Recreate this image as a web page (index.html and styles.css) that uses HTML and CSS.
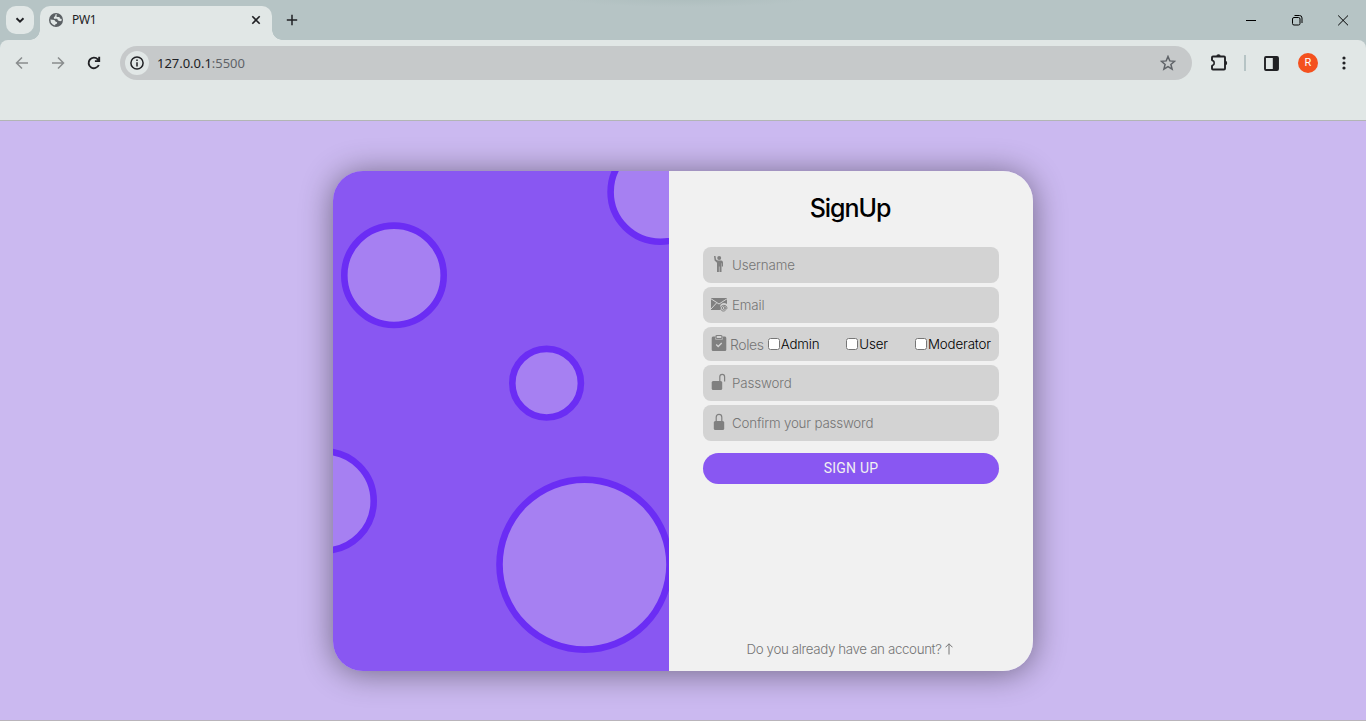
FILE: index.html
```html
<!DOCTYPE html>
<html lang="en">
<head>
<meta charset="utf-8">
<title>PW1</title>
<link rel="stylesheet" href="styles.css">
</head>
<body>
<header class="browser">
  <div class="tabstrip">
    <button class="tab-search" aria-label="Search tabs"><svg width="10" height="10" viewBox="0 0 10 10"><path class="line thick" d="M1.5 3.2 5 6.6 8.500 3.200"/></svg></button>
    <div class="tab">
      <svg width="14" height="14" viewBox="0 0 14 14"><circle cx="7" cy="7" r="7" fill="#5b6064"/><path fill="#e1e7e6" d="M8 1.300 6.300 1.500V3L4.800 4.200 5 5.800H8.200L9 7.500 11.200 8.300 12.600 7.800 12.700 6 11 5.500 10.400 4.100H8.200L7.300 3.200Z M1.400 6.600 5.400 7 6.500 8.600 8.200 9.200 7.800 10.700 6.300 11.300 6.100 12.600 3.800 11.600 1.900 9.500Z"/></svg>
      <span class="tab-title">PW1</span>
      <svg width="10" height="10" viewBox="0 0 10 10"><path class="line close" d="M1.300 1.300 8.700 8.700M8.700 1.300 1.300 8.700"/></svg>
    </div>
    <svg class="new-tab" width="12" height="12" viewBox="0 0 12 12"><path class="line" d="M6 .8V11.200M.8 6H11.200"/></svg>
    <div class="window-controls">
      <svg width="11" height="11" viewBox="0 0 11 11"><path class="hair" d="M0 5.500H10"/></svg>
      <svg width="11" height="11" viewBox="0 0 11 11"><rect class="hair" x=".5" y="2.500" width="7.500" height="7.500" rx="1.500"/><path class="hair" d="M2.500 .5H7.500Q10 .5 10 3V8"/></svg>
      <svg width="11" height="11" viewBox="0 0 11 11"><path class="hair" d="M.2.500 10 10.300M10 .5.2 10.300"/></svg>
    </div>
  </div>
  <div class="toolbar">
    <div class="nav">
      <svg class="muted" width="14" height="14" viewBox="0 0 14 14"><path class="line" d="M13 7H1.500M7 1.500 1.500 7 7 12.500"/></svg>
      <svg class="muted" width="14" height="14" viewBox="0 0 14 14"><path class="line" d="M1 7H12.500M7 1.500 12.500 7 7 12.500"/></svg>
      <svg width="14" height="14" viewBox="0 0 14 14"><path class="line thick" d="M11.800 9A5.300 5.300 0 1 1 10.800 3.300L12 4.500M12.200.8V5.100H7.900"/></svg>
    </div>
    <div class="address">
      <span class="info"><svg width="14" height="14" viewBox="0 0 14 14"><circle class="line" cx="7" cy="7" r="6.100"/><path class="line" d="M7 6.200V10.500M7 3.500V5"/></svg></span>
      <span class="url">127.0.0.1<span class="port">:5500</span></span>
      <svg class="star" width="16" height="16" viewBox="0 0 16 16"><path d="M8 1.500 9.800 5.900 14.600 6.300 10.900 9.400 12.100 14.100 8 11.600 3.900 14.100 5.100 9.400 1.400 6.300 6.200 5.900Z"/></svg>
    </div>
    <div class="actions">
      <svg width="18" height="18" viewBox="0 0 18 18"><rect class="line thick" x="2" y="2.500" width="13" height="13" rx="1"/><path fill="#202124" d="M6.300 2.500A2.200 2.200 0 0 1 10.700 2.500ZM15 6.800A2.200 2.200 0 0 1 15 11.200Z"/><path fill="#e1e7e6" d="M.5 6.700H3V11.300H.5Z"/><path class="line" d="M1.800 6.600A2.400 2.400 0 0 1 1.800 11.400"/></svg>
      <i class="separator"></i>
      <svg width="15" height="15" viewBox="0 0 15 15"><rect class="line thick" x="1" y="1" width="13" height="13" rx="1"/><path fill="#202124" d="M8.800 1H14V14H8.800Z"/></svg>
      <span class="avatar">R</span>
      <svg width="4" height="14" viewBox="0 0 4 14"><g fill="#202124"><circle cx="2" cy="2" r="1.600"/><circle cx="2" cy="7" r="1.600"/><circle cx="2" cy="12" r="1.600"/></g></svg>
    </div>
  </div>
</header>
<main class="page">
  <section class="card">
    <svg class="art" width="336" height="500" viewBox="0 0 336 500">
      <circle cx="61" cy="104.300" r="49.700"/>
      <circle cx="327.300" cy="21" r="49.700"/>
      <circle cx="213.600" cy="212.200" r="34.300"/>
      <circle cx="-9" cy="330" r="49.700"/>
      <circle cx="251.500" cy="393.600" r="85"/>
    </svg>
    <form class="form">
      <h1 class="heading">SignUp</h1>
      <div class="field">
        <svg class="icon" width="16" height="18" viewBox="0 0 16 18"><circle cx="8.200" cy="3" r="2"/><path d="M3 1H4.500L5 4.600 6.800 5.500H10.300Q11.800 5.700 12 7.500V11.500H10.900V8.200H10.500V17H8.500V11.500H7.900V17H6V7.700L3.600 5.500Z"/></svg>
        <span class="hint username">Username</span>
      </div>
      <div class="field">
        <svg class="icon mail" width="17" height="18" viewBox="0 0 17 18"><path d="M0 3H16V9Q12 6.500 9.300 10V15H0Z"/><path class="cut" d="M0 3.800 8 9 16 3.800M0 14 5.500 8"/><path class="outline at" d="M14.500 15.300C12 17 9.500 15.500 9.600 13 9.800 9.600 15.900 9.400 15.900 12.800 15.900 14.800 14.100 14.700 14.100 13.300V11.500M14 13A1.300 1.500 0 1 1 11.400 13 1.300 1.500 0 0 1 14 13Z"/></svg>
        <span class="hint email">Email</span>
      </div>
      <div class="field roles">
        <svg class="icon" width="16" height="18" viewBox="0 0 16 18"><path d="M2 2.500H4.300V5.500H11.700V2.500H14Q15.300 2.500 15.300 4V15.700Q15.300 17 14 17H2Q.7 17 .7 15.700V4Q.7 2.500 2 2.500Z"/><rect class="outline" x="5" y="1.500" width="6" height="3" rx="1"/><path class="cut check" d="M5.200 10.500 7.200 12.500 10.700 9"/></svg>
        <span class="hint role-title">Roles</span>
        <label class="role admin"><input type="checkbox"><span>Admin</span></label>
        <label class="role user"><input type="checkbox"><span>User</span></label>
        <label class="role moderator"><input type="checkbox"><span>Moderator</span></label>
      </div>
      <div class="field">
        <svg class="icon" width="16" height="18" viewBox="0 0 16 18"><rect x=".7" y="8" width="10.500" height="9" rx="1.500"/><path class="outline" d="M8.800 8V3.800Q8.800 1.400 11.200 1.400T13.600 3.800V8.500"/></svg>
        <span class="hint password">Password</span>
      </div>
      <div class="field">
        <svg class="icon" width="16" height="18" viewBox="0 0 16 18"><rect x="2.800" y="8" width="10.400" height="9" rx="1.500"/><path class="outline" d="M5.200 8V4.200Q5.200 1.400 8 1.400T10.800 4.200V8"/></svg>
        <span class="hint confirm">Confirm your password</span>
      </div>
      <button class="submit" type="button">SIGN UP</button>
      <a class="account"><span>Do you already have an account?</span><svg width="8" height="12" viewBox="0 0 8 12"><path d="M4 11.500V.8M.5 4.300 4 .8 7.500 4.300"/></svg></a>
    </form>
  </section>
</main>
</body>
</html>
```
FILE: styles.css
```css
* { box-sizing: border-box; }
body { margin: 0; height: 721px; overflow: hidden; display: flex; flex-direction: column; background: #cbb9f0; font-family: Inter, sans-serif; }
svg { display: block; flex: none; }
button { border: 0; padding: 0; }

.browser { height: 121px; background: #b6c4c5; border-bottom: 1px solid #b2b5b4; font-family: "Noto Sans", sans-serif; color: #202124; }
.line { fill: none; stroke: #202124; stroke-width: 1.500; }
.line.thick { stroke-width: 1.900; }
.line.close { stroke-width: 1.600; }
.hair { fill: none; stroke: #000; stroke-width: 1; }
.tabstrip { height: 40px; display: flex; align-items: center; padding-left: 6px; background: radial-gradient(ellipse 125px 9px at 686px -2px, #adbdbd, #b6c4c5); }
.tab-search { width: 28px; height: 28px; border-radius: 10px; background: #e1e7e6; display: grid; place-items: center; }
.tab { position: relative; align-self: flex-end; width: 232px; height: 34px; margin-left: 6px; padding: 0 11px 6px 9px; display: flex; align-items: center; background: #e1e7e6; border-radius: 10px 10px 0 0; }
.tab::before, .tab::after { content: ""; position: absolute; bottom: 0; width: 10px; height: 10px; }
.tab::before { left: -10px; background: radial-gradient(circle at 0 0, transparent 9.500px, #e1e7e6 10px); }
.tab::after { right: -10px; background: radial-gradient(circle at 100% 0, transparent 9.500px, #e1e7e6 10px); }
.tab-title { flex: 1; margin-left: 9px; font-size: 12px; line-height: 16px; letter-spacing: -.3px; }
.new-tab { margin-left: 14px; }
.window-controls { display: flex; gap: 35px; margin-left: auto; margin-right: 17px; }

.toolbar { height: 80px; display: flex; align-items: flex-start; padding-top: 6px; background: #e1e7e6; border-radius: 8px 8px 0 0; }
.nav { width: 120px; height: 34px; padding-left: 15px; display: flex; align-items: center; gap: 22px; }
.muted { opacity: .45; }
.address { width: 1072px; height: 34px; padding: 0 16px 0 5px; display: flex; align-items: center; background: #c6c9ca; border-radius: 17px; }
.info { width: 24px; height: 24px; border-radius: 50%; background: #e1e7e6; display: grid; place-items: center; }
.url { margin-left: 8px; font-size: 13px; line-height: 18px; letter-spacing: -.03px; }
.port { color: #5f6368; }
.star { margin-left: auto; fill: none; stroke: #5f6368; stroke-width: 1.500; }
.actions { flex: 1; height: 34px; display: flex; align-items: center; padding-left: 18px; }
.separator { width: 2px; height: 16px; margin: 0 18px 0 16px; background: #b6c4c5; }
.avatar { width: 20px; height: 20px; margin: 0 24px 0 19px; border-radius: 50%; background: #f4511e; color: #fff; font: 11px/20px Roboto, sans-serif; text-align: center; }

.page { flex: 1; display: flex; justify-content: center; align-items: flex-start; padding-top: 50px; border-bottom: 1px solid #b9b4ba; }
.card { width: 700px; height: 500px; display: flex; border-radius: 30px; box-shadow: 0 2px 32px rgba(0, 0, 0, .45); }
.art { background: #8957f2; border-radius: 30px 0 0 30px; overflow: hidden; fill: #a680f2; stroke: #6b2df4; stroke-width: 6.600; }
.form { width: 364px; display: flex; flex-direction: column; gap: 4px; padding: 20px 34px 12px; background: #f1f1f1; border-radius: 0 30px 30px 0; }
.heading { margin: 0 0 18px; padding-right: 2px; height: 34px; text-align: center; font-size: 25px; line-height: 34px; font-weight: 500; letter-spacing: -1.050px; color: #000; }
.field { height: 36px; padding: 0 8px; display: flex; align-items: center; background: #d3d3d3; border-radius: 8px; font-size: 13.330px; }
.icon { margin-top: -2px; fill: gray; }
.mail { margin-right: -1px; }
.outline { fill: none; stroke: gray; stroke-width: 1.200; }
.outline.at { stroke-width: 1; }
.cut { fill: none; stroke: #d3d3d3; stroke-width: 1; }
.cut.check { stroke-width: 1.300; }
.hint { margin-left: 5px; font-weight: 300; color: #757575; white-space: nowrap; letter-spacing: -.12px; }
.confirm { letter-spacing: -.19px; }
.roles { height: 34px; }
.role-title { width: 35px; margin-left: 3px; font-size: 14px; letter-spacing: -.4px; }
.role { display: flex; align-items: center; font-size: 13.330px; font-weight: 300; color: #000; white-space: nowrap; letter-spacing: -.2px; }
.role input { width: 12px; height: 12px; margin: 0 1px 0 0; }
.admin { margin-left: 3px; width: 78px; }
.user { width: 69px; }
.role.user, .role.moderator { padding-left: 1px; }
.moderator { letter-spacing: -.14px; }
.submit { height: 31px; margin-top: 8px; border-radius: 16px; background: #8957f2; color: #f1f1f1; font: 14px/31px Roboto, sans-serif; letter-spacing: .2px; }
.account { margin-top: auto; padding-right: 3px; display: flex; justify-content: center; align-items: center; gap: 3px; height: 20px; font-size: 13.330px; font-weight: 300; letter-spacing: -.36px; color: #757575; white-space: nowrap; }
.account svg { fill: none; stroke: #757575; stroke-width: 1; }
```
